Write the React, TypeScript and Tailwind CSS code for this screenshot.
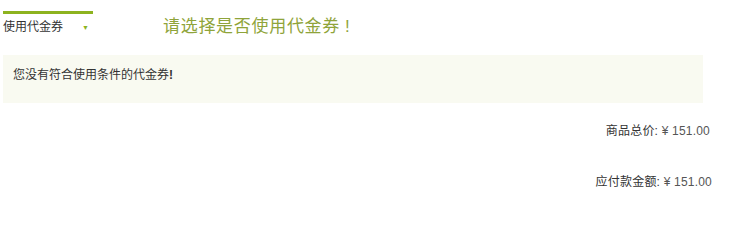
export default function App() {
  return (
    <div className="w-[743px] h-[200px] bg-white text-[12px] text-[#333] font-['Liberation_Sans','Noto_Sans_CJK_SC',sans-serif]">
      <div className="flex items-start pt-[11px] pl-[3px]">
        <div className="w-[90px] border-t-[3px] border-[#8db31f] flex items-center justify-between pt-[5px] pr-[4px]">
          <span className="leading-[16px]">使用代金券</span>
          <span className="text-[#8db31f] text-[7px] leading-none">▼</span>
        </div>
        <div className="ml-[70px] pt-[3px] text-[17px] tracking-[0.7px] leading-[26px] text-[#8fa43a]">
          请选择是否使用代金券<span className="ml-[5px]">!</span>
        </div>
      </div>
      <div className="mt-[15px] ml-[3px] w-[700px] h-[48px] bg-[#f9faf1] pl-[10px] pt-[11px]">
        <span className="leading-[14px]">您没有符合使用条件的代金券<b>!</b></span>
      </div>
      <div className="flex flex-col items-end pr-[33px] pt-[21px] gap-[37px]">
        <div className="leading-[14px] tracking-[0.2px]">
          商品总价: <span className="text-[#555]">¥ 151.00</span>
        </div>
        <div className="leading-[14px] mr-[-2px] tracking-[0.2px]">
          应付款金额: <span className="text-[#555]">¥ 151.00</span>
        </div>
      </div>
    </div>
  );
}
